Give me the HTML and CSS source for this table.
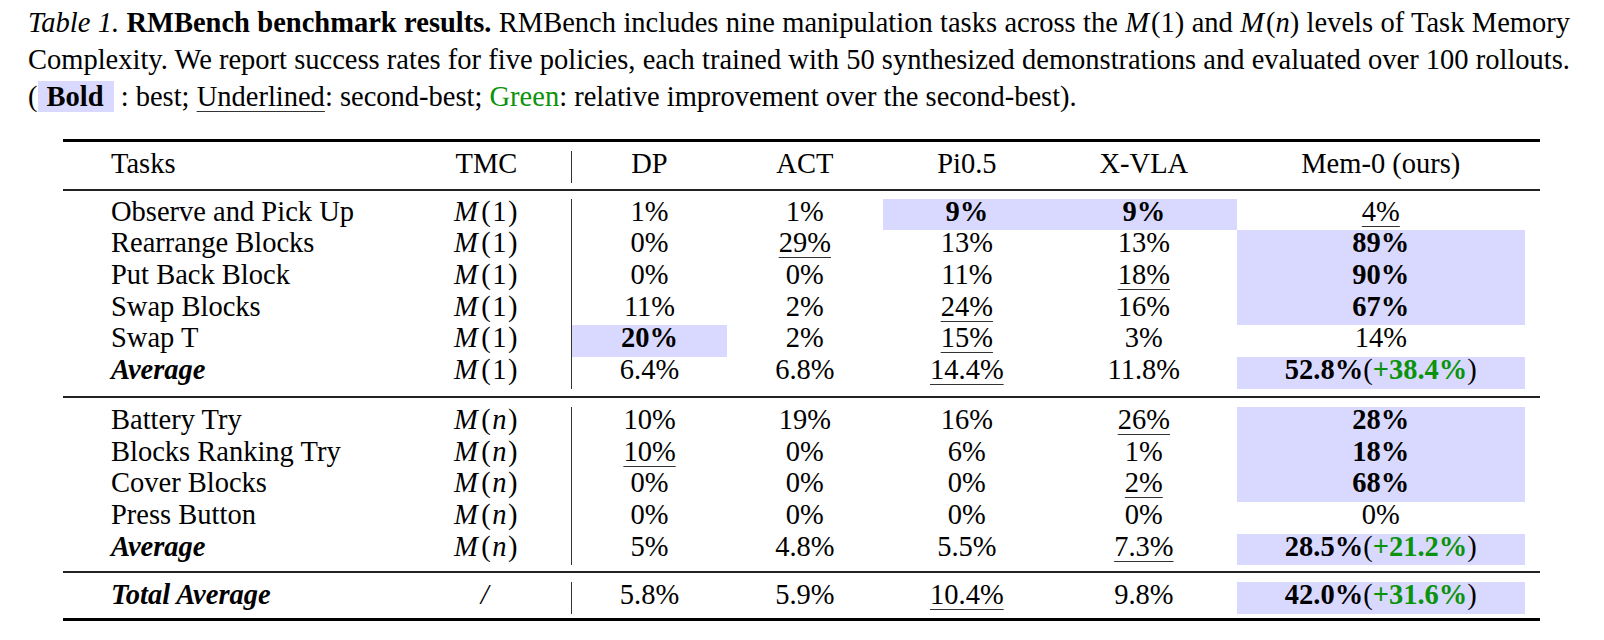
FILE: index.html
```html
<!DOCTYPE html>
<html lang="en">
<head>
<meta charset="utf-8">
<title>RMBench benchmark results</title>
<link rel="stylesheet" href="styles.css">
</head>
<body>
<div class="caption">
  <span class="line tight"><i>Table 1.</i> <b>RMBench benchmark results.</b> RMBench includes nine manipulation tasks across the <span class="math"><i>M</i>(1)</span> and <span class="math"><i>M</i>(<i>n</i>)</span> levels of Task Memory</span>
  <span class="line">Complexity. We report success rates for five policies, each trained with 50 synthesized demonstrations and evaluated over 100 rollouts.</span>
  <span class="line last">(<span class="hl-box">Bold</span> : best; <span class="ul">Underlined</span>: second-best; <span class="green">Green</span>: relative improvement over the second-best).</span>
</div>

<div class="tbl">
  <div class="sec sec-head">
    <div class="row">
      <div class="task">Tasks</div><div>TMC</div><div class="dp">DP</div><div>ACT</div><div>Pi0.5</div><div>X-VLA</div><div>Mem-0 (ours)</div>
    </div>
  </div>

  <div class="sec sec-1">
    <div class="row">
      <div class="task">Observe and Pick Up</div><div class="math"><i>M</i>(1)</div><div class="dp">1%</div><div>1%</div><div class="best">9%</div><div class="best">9%</div><div><span class="ul">4%</span></div>
    </div>
    <div class="row">
      <div class="task">Rearrange Blocks</div><div class="math"><i>M</i>(1)</div><div class="dp">0%</div><div><span class="ul">29%</span></div><div>13%</div><div>13%</div><div class="best">89%</div>
    </div>
    <div class="row">
      <div class="task">Put Back Block</div><div class="math"><i>M</i>(1)</div><div class="dp">0%</div><div>0%</div><div>11%</div><div><span class="ul">18%</span></div><div class="best">90%</div>
    </div>
    <div class="row">
      <div class="task">Swap Blocks</div><div class="math"><i>M</i>(1)</div><div class="dp">11%</div><div>2%</div><div><span class="ul">24%</span></div><div>16%</div><div class="best">67%</div>
    </div>
    <div class="row">
      <div class="task">Swap T</div><div class="math"><i>M</i>(1)</div><div class="dp best">20%</div><div>2%</div><div><span class="ul">15%</span></div><div>3%</div><div>14%</div>
    </div>
    <div class="row">
      <div class="task avg">Average</div><div class="math"><i>M</i>(1)</div><div class="dp">6.4%</div><div>6.8%</div><div><span class="ul">14.4%</span></div><div>11.8%</div><div class="hl"><b>52.8%</b>(<b class="green">+38.4%</b>)</div>
    </div>
  </div>

  <div class="sec sec-2">
    <div class="row">
      <div class="task">Battery Try</div><div class="math"><i>M</i>(<i>n</i>)</div><div class="dp">10%</div><div>19%</div><div>16%</div><div><span class="ul">26%</span></div><div class="best">28%</div>
    </div>
    <div class="row">
      <div class="task">Blocks Ranking Try</div><div class="math"><i>M</i>(<i>n</i>)</div><div class="dp"><span class="ul">10%</span></div><div>0%</div><div>6%</div><div>1%</div><div class="best">18%</div>
    </div>
    <div class="row">
      <div class="task">Cover Blocks</div><div class="math"><i>M</i>(<i>n</i>)</div><div class="dp">0%</div><div>0%</div><div>0%</div><div><span class="ul">2%</span></div><div class="best">68%</div>
    </div>
    <div class="row">
      <div class="task">Press Button</div><div class="math"><i>M</i>(<i>n</i>)</div><div class="dp">0%</div><div>0%</div><div>0%</div><div>0%</div><div>0%</div>
    </div>
    <div class="row">
      <div class="task avg">Average</div><div class="math"><i>M</i>(<i>n</i>)</div><div class="dp">5%</div><div>4.8%</div><div>5.5%</div><div><span class="ul">7.3%</span></div><div class="hl"><b>28.5%</b>(<b class="green">+21.2%</b>)</div>
    </div>
  </div>

  <div class="sec sec-total">
    <div class="row">
      <div class="task avg">Total Average</div><div class="math"><i>/</i></div><div class="dp">5.8%</div><div>5.9%</div><div><span class="ul">10.4%</span></div><div>9.8%</div><div class="hl"><b>42.0%</b>(<b class="green">+31.6%</b>)</div>
    </div>
  </div>
</div>
</body>
</html>
```

FILE: styles.css
```css
body {
  margin: 0;
  padding: 4px 0 0 28px;
  background: #ffffff;
  color: #000000;
  font-family: "Liberation Serif", "Times New Roman", serif;
  font-size: 28.5px;
}

.caption {
  width: 1542px;
  line-height: 37px;
}

.caption .line {
  display: block;
  text-align: justify;
  text-align-last: justify;
}

.caption .line.tight {
  word-spacing: -4px;
}

.caption .line.last {
  text-align: left;
  text-align-last: auto;
}

.hl-box {
  background: #d9d9ff;
  font-weight: bold;
  padding: 0 10px 0 9px;
}

.green {
  color: #0b930b;
}

.ul {
  text-decoration: underline;
  text-decoration-thickness: 1px;
  text-underline-offset: 5px;
  text-decoration-color: #333333;
}

.math i:first-child {
  margin-right: 2px;
}

.row .math {
  letter-spacing: 1.5px;
}

/* table */
.tbl {
  width: 1477px;
  margin: 24px 0 0 35px;
  border-top: 3px solid #000000;
  border-bottom: 3px solid #000000;
}

.sec {
  display: flex;
  flex-direction: column;
}

.sec + .sec {
  border-top: 2px solid #222222;
}

.sec-head { padding: 9px 0 6px; }
.sec-1 { padding: 8px 0 7.33px; }
.sec-2 { padding: 9px 0 6px; }
.sec-total { padding: 8.65px 0 4.5px; }

.row {
  display: grid;
  grid-template-columns: 339px 169px 156px 155.7px 168.3px 185.7px 288.3px;
  height: 31.67px;
  line-height: 26px;
}

.row > div {
  text-align: center;
  white-space: nowrap;
}

.row > .task {
  text-align: left;
  padding-left: 48px;
}

.row > .avg {
  font-weight: bold;
  font-style: italic;
}

.row > .dp {
  border-left: 1px solid #333333;
}

.best {
  background: #d9d9ff;
  font-weight: bold;
}

.hl {
  background: #d9d9ff;
}
```
